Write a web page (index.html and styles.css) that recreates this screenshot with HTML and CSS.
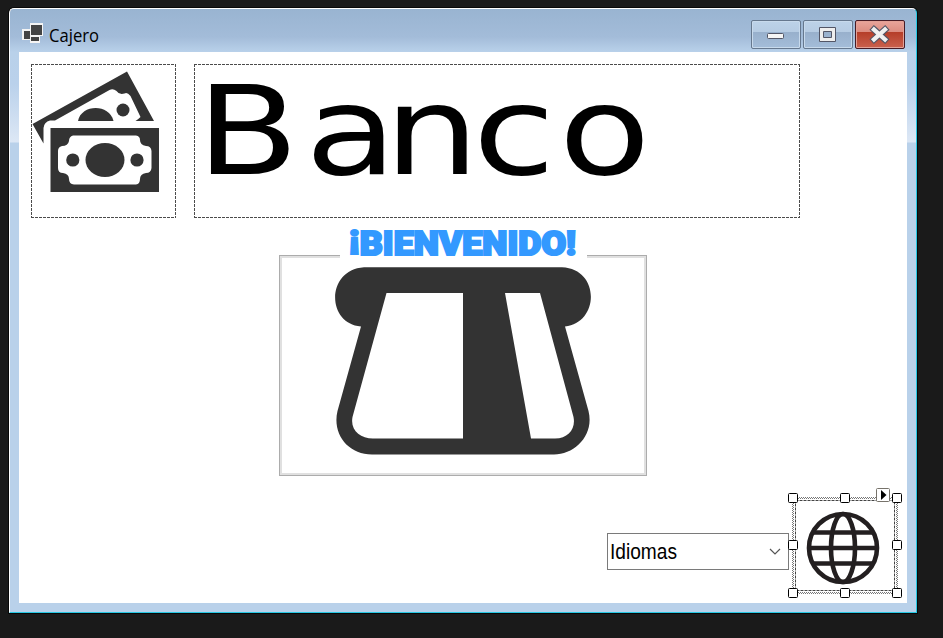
FILE: index.html
```
<!DOCTYPE html>
<html lang="es">
<head>
<meta charset="utf-8">
<title>Cajero</title>
<link rel="stylesheet" href="styles.css">
</head>
<body>
<main class="window">
  <header class="titlebar">
    <svg class="app-icon" width="22" height="21" viewBox="0 0 22 21">
      <path fill="#f4f4f4" d="M0 6h8V0h13v13h-3v7H8v-3H0z"/>
      <path fill="#444" d="M2 8h6v8H2zM9 2h11v10H9zM9 14h8v4H9z"/>
    </svg>
    <svg class="title" width="54" height="26"><text x="0" y="19" textLength="50" lengthAdjust="spacingAndGlyphs">Cajero</text></svg>
    <div class="buttons">
      <button class="btn" aria-label="Minimizar"><svg width="50" height="29"><rect x="16.500" y="13.500" width="16" height="5" rx="1" fill="#f5f5f5" stroke="#535666"/></svg></button>
      <button class="btn" aria-label="Maximizar"><svg width="50" height="29"><path d="M16.500 7.500h16v14h-16zM20.500 11.500v6h8v-6z" fill="#eee" fill-rule="evenodd" stroke="#535666" stroke-linejoin="round"/></svg></button>
      <button class="btn close" aria-label="Cerrar"><svg width="50" height="29"><path d="M19 9.500L30 19.500M30 9.500L19 19.500" stroke="#535666" stroke-width="6.500" stroke-linecap="square"/><path d="M19 9.500L30 19.500M30 9.500L19 19.500" stroke="#f0f0f0" stroke-width="4.300" stroke-linecap="square"/></svg></button>
    </div>
  </header>
  <section class="client">
    <div class="brand">
      <div class="picture money dashed">
        <svg width="145" height="154" viewBox="31 64 145 154">
          <g fill="#333">
            <path d="M32.500 124L127 71.500L154 121H135.500Q138 119.500 140.500 117L130.500 96Q127 91.500 124.500 93.500Q119 95 116.500 91Q113 88 109.500 90L55 120.500H50Q44 122 43.500 128V143.500z"/>
            <path d="M78 121C81 104.500 109 103 113.500 121z"/>
            <circle cx="123" cy="110" r="6.500"/>
            <path fill-rule="evenodd" d="M50.500 128H159V192H50.500zM73 135.500Q69 136.500 69 141Q68 146 62 146Q58 147 58 151V168Q58 173 63 173Q69 174 69 179Q69 184 74 184.500H136Q140 184 140 179Q140 174 146 173Q151 173 151.500 168V151Q151 146 146 146Q140 145 140 140Q140 136 136 135.500z"/>
            <ellipse cx="105" cy="160" rx="19.500" ry="17"/>
            <circle cx="72.800" cy="160" r="6.600"/><circle cx="137" cy="160" r="6.600"/>
          </g>
        </svg>
      </div>
      <div class="picture name dashed">
        <svg width="606" height="154"><text class="bank" transform="scale(1.22 1)" x="1.900 91 156 228.400 299" y="110">Banco</text></svg>
      </div>
    </div>
    <section class="welcome">
      <h1 class="legend"><svg width="247" height="36"><text x="9" y="26.500" dy="-7 7" textLength="227" lengthAdjust="spacingAndGlyphs">¡BIENVENIDO!</text></svg></h1>
      <svg class="card-slot" width="258" height="190" viewBox="334 266 258 190">
        <path fill="#333" fill-rule="evenodd" d="M364 267.300H562C600.500 269 599.500 323 565 326.500L588.500 411C594.500 435 575 454.500 554 454.500H372C348 454.500 332 434 337.500 411L361 326.500C326.500 324 325.500 270 364 267.300zM386.500 293L352.500 417C350 430 360 438.500 373 438.500H463V293zM505 293L531 438.500H554C568 439 576 429 573.500 417L540 293z"/>
      </svg>
    </section>
    <footer class="language">
      <div class="combo">
        <svg width="72" height="30"><text x="0" y="22" textLength="67" lengthAdjust="spacingAndGlyphs">Idiomas</text></svg>
        <svg class="chevron" width="12" height="8"><path d="M1 1L6 6L11 1" fill="none" stroke="#555" stroke-width="1.200"/></svg>
      </div>
      <div class="globe">
        <svg width="112" height="103" viewBox="789 494 112 103">
          <defs><pattern id="dots" width="2" height="2" patternUnits="userSpaceOnUse"><path fill="#777" d="M0 0h1v1H0zM1 1h1v1H1z"/></pattern></defs>
          <path fill="url(#dots)" fill-rule="evenodd" d="M792 497H898V594H792zM794 499V592H896V499z"/>
          <rect x="795.500" y="500.500" width="99" height="90" fill="none" stroke="#444" stroke-dasharray="3 1"/>
          <g fill="none" stroke="#231f20" stroke-width="4.600">
            <circle cx="843" cy="548" r="34"/><ellipse cx="843" cy="548" rx="12" ry="34"/>
            <path d="M812 532.500H874M808 548H878M812 563.500H874"/>
          </g>
          <g fill="#fff" stroke="#000">
            <rect x="788.500" y="493.500" width="9" height="9" rx="1"/><rect x="840.500" y="493.500" width="9" height="9" rx="1"/><rect x="892.500" y="493.500" width="9" height="9" rx="1"/>
            <rect x="788.500" y="540.500" width="9" height="9" rx="1"/><rect x="892.500" y="540.500" width="9" height="9" rx="1"/>
            <rect x="788.500" y="588.500" width="9" height="9" rx="1"/><rect x="840.500" y="588.500" width="9" height="9" rx="1"/><rect x="892.500" y="588.500" width="9" height="9" rx="1"/>
          </g>
          <rect x="876.500" y="488.500" width="13" height="13" rx="1" fill="#fff" stroke="#77736b"/>
          <path d="M881 490V500L886.500 495z"/>
        </svg>
      </div>
    </footer>
  </section>
</main>
</body>
</html>
```
FILE: styles.css
```
* { box-sizing: border-box; }
body { margin: 0; padding: 8px 0 0 9px; height: 638px; overflow: hidden; background: #1a1a1a; }
svg { display: block; flex: none; overflow: visible; }
.window {
  width: 908px; height: 605px;
  padding: 0 9px 9px;
  border: 1px solid #fff; border-right-color: #27c9e4; border-bottom-color: #27c9e4;
  border-radius: 5px 5px 0 0;
  box-shadow: 0 0 0 1px #080808;
  background: linear-gradient(#99b4d1 0, #a3bcd9 28px, #b9d1ea 43px, #bad1eb 75px, #dce7f5 132px, #dce7f5 133px, #b9d1ea 134px);
}
.titlebar { height: 43px; display: flex; align-items: flex-start; padding-left: 3px; }
.app-icon { margin-top: 14px; }
.title { margin: 14px 0 0 5px; font: 18px "Open Sans", "Noto Sans", sans-serif; fill: #000; }
.buttons { display: flex; gap: 2px; margin: 11px 2px 0 auto; }
.btn {
  width: 50px; height: 29px; padding: 0; border: 1px solid #66788e; border-radius: 2px;
  background: linear-gradient(#bdd2e8 0, #b6cce3 11px, #98b0cc 11px, #a4bdd9 100%);
  box-shadow: inset 0 0 0 1px #c8daec;
}
.btn svg { margin: -1px; }
.close {
  border-color: #471b25;
  background: linear-gradient(#e9a59b 0, #dc8c80 11px, #b53d28 11px, #ca614e 100%);
  box-shadow: inset 0 0 0 1px #e3a196;
}
.client { width: 888px; height: 551px; padding: 12px 6px 0 12px; background: #fff; display: flex; flex-direction: column; }
.brand { display: flex; gap: 18px; }
.picture {
  height: 154px;
  background:
    repeating-linear-gradient(90deg, #4b4b4b 0 3px, #fff 3px 4px) top / 100% 1px no-repeat,
    repeating-linear-gradient(90deg, #4b4b4b 0 3px, #fff 3px 4px) bottom / 100% 1px no-repeat,
    repeating-linear-gradient(#4b4b4b 0 3px, #fff 3px 4px) left / 1px 100% no-repeat,
    repeating-linear-gradient(#4b4b4b 0 3px, #fff 3px 4px) right / 1px 100% no-repeat;
}
.money { width: 145px; }
.name { width: 606px; }
.bank { font: 123px "DejaVu Sans", sans-serif; }
.welcome {
  width: 368px; height: 221px; margin: 37px 0 0 248px;
  border: 1px solid #acacac; box-shadow: inset 0 0 0 2px #e0e0e0;
  display: flex; flex-direction: column; align-items: flex-start;
}
.legend { width: 247px; height: 36px; margin: -28px 0 0 60px; background: #fff; font: 900 33px Roboto, sans-serif; }
.legend text { fill: #39f; stroke: #39f; stroke-width: 2.2px; }
.card-slot { margin: 2px 0 0 54px; }
.language { display: flex; align-items: flex-start; margin-top: 18px; justify-content: flex-end; }
.combo {
  width: 182px; height: 37px; margin-top: 39px; padding: 3px 7px 3px 2px; border: 1px solid #7a7a7a;
  display: flex; align-items: center; justify-content: space-between;
  font: 22px "Liberation Sans", sans-serif;
}
.globe { width: 112px; height: 103px; }
```
